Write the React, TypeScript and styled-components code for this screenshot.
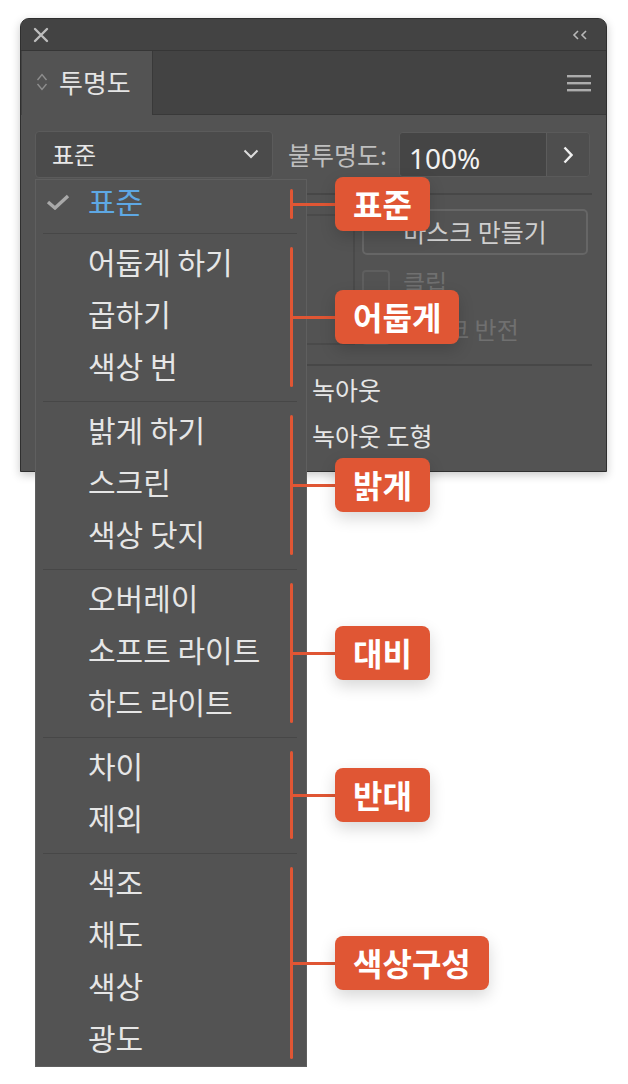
import React from "react";
import styled, { createGlobalStyle } from "styled-components";

const Global = createGlobalStyle`
  html, body {
    margin: 0;
    padding: 0;
    background: #ffffff;
  }
  body {
    font-family: "Noto Sans CJK KR", "Noto Sans", sans-serif;
  }
`;

type Group = { label: string; items: string[] };

const groups: Group[] = [
  { label: "표준", items: ["표준"] },
  { label: "어둡게", items: ["어둡게 하기", "곱하기", "색상 번"] },
  { label: "밝게", items: ["밝게 하기", "스크린", "색상 닷지"] },
  { label: "대비", items: ["오버레이", "소프트 라이트", "하드 라이트"] },
  { label: "반대", items: ["차이", "제외"] },
  { label: "색상구성", items: ["색조", "채도", "색상", "광도"] },
];

const selected = "표준";

const App = () => {
  return (
    <Page>
      <Global />
      <Panel>
        <TitleBar>
          <svg width="16" height="16" viewBox="0 0 16 16">
            <path
              d="M2 2 L14 14 M14 2 L2 14"
              stroke="#bdbdbd"
              strokeWidth="2.4"
              strokeLinecap="round"
            />
          </svg>
          <svg width="16" height="10" viewBox="0 0 16 10">
            <polyline points="6,1 2,5 6,9" fill="none" stroke="#b8b8b8" strokeWidth="1.6" />
            <polyline points="14,1 10,5 14,9" fill="none" stroke="#b8b8b8" strokeWidth="1.6" />
          </svg>
        </TitleBar>
        <TabRow>
          <Tab>
            <svg width="12" height="20" viewBox="0 0 12 20">
              <polyline points="1.5,8 6,2.5 10.5,8" fill="none" stroke="#8e8e8e" strokeWidth="1.4" />
              <polyline points="1.5,12 6,17.5 10.5,12" fill="none" stroke="#8e8e8e" strokeWidth="1.4" />
            </svg>
            <TabTitle>투명도</TabTitle>
          </Tab>
          <TabFill>
            <svg width="24" height="18" viewBox="0 0 24 18">
              <rect x="0" y="1" width="24" height="2.4" fill="#acacac" />
              <rect x="0" y="8" width="24" height="2.4" fill="#acacac" />
              <rect x="0" y="15" width="24" height="2.4" fill="#acacac" />
            </svg>
          </TabFill>
        </TabRow>
        <Body>
          <TopRow>
            <DropdownWrap>
              <Dropdown>
                <span>표준</span>
                <svg width="16" height="10" viewBox="0 0 16 10">
                  <polyline points="1.5,1.5 8,8 14.5,1.5" fill="none" stroke="#dcdcdc" strokeWidth="2" />
                </svg>
              </Dropdown>
              <Menu>
                {groups.map((group, gi) => (
                  <React.Fragment key={group.label}>
                    {gi > 0 && <Separator />}
                    <MenuGroup>
                      {group.items.map((item) => (
                        <Item key={item} $first={gi === 0}>
                          <CheckSlot>
                            {item === selected && (
                              <svg width="24" height="16" viewBox="0 0 24 16">
                                <polyline
                                  points="2,8 9,14 22,2"
                                  fill="none"
                                  stroke="#a9a9a9"
                                  strokeWidth="3.4"
                                />
                              </svg>
                            )}
                          </CheckSlot>
                          <ItemText $active={item === selected}>{item}</ItemText>
                        </Item>
                      ))}
                      <Annotation>
                        <Bracket />
                        <Connector />
                        <Tag>{group.label}</Tag>
                      </Annotation>
                    </MenuGroup>
                  </React.Fragment>
                ))}
              </Menu>
            </DropdownWrap>
            <OpacityLabel>불투명도:</OpacityLabel>
            <InputGroup>
              <OpacityInput>100%</OpacityInput>
              <StepButton>
                <svg width="10" height="18" viewBox="0 0 10 18">
                  <polyline points="1.5,1.5 8.5,9 1.5,16.5" fill="none" stroke="#f0f0f0" strokeWidth="2.4" />
                </svg>
              </StepButton>
            </InputGroup>
          </TopRow>
          <Rule $top={15} $bottom={14} />
          <MaskRow>
            <Thumb />
            <MaskControls>
              <MaskButton>마스크 만들기</MaskButton>
              <CheckRow>
                <CheckBox />
                <CheckText>클립</CheckText>
              </CheckRow>
              <CheckRow>
                <CheckBox />
                <CheckText>마스크 반전</CheckText>
              </CheckRow>
            </MaskControls>
          </MaskRow>
          <Rule $top={19} $bottom={1} />
          <OptionRow>녹아웃</OptionRow>
          <OptionRow>녹아웃 도형</OptionRow>
        </Body>
      </Panel>
    </Page>
  );
};

export default App;

const Page = styled.div`
  position: relative;
  width: 628px;
  height: 1084px;
  padding: 18px 0 0 20px;
  box-sizing: border-box;
`;

const Panel = styled.div`
  width: 587px;
  border: 1px solid #2f2f2f;
  border-radius: 9px 9px 0 0;
  background: #535353;
  box-shadow: 0 3px 10px rgba(0, 0, 0, 0.22);
  box-sizing: border-box;
`;

const TitleBar = styled.div`
  height: 31px;
  display: flex;
  align-items: center;
  justify-content: space-between;
  padding: 0 18px 0 12px;
  background: #434343;
  border-bottom: 1px solid #363636;
  border-radius: 8px 8px 0 0;
`;

const TabRow = styled.div`
  height: 64px;
  display: flex;
  background: #434343;
`;

const Tab = styled.div`
  width: 131px;
  display: flex;
  align-items: center;
  gap: 11px;
  padding-left: 14px;
  padding-bottom: 2px;
  box-sizing: border-box;
  background: #535353;
  border-right: 1px solid #393939;
  margin-left: 1px;
`;

const TabTitle = styled.span`
  font-size: 26px;
  color: #e4e4e4;
  line-height: 1;
`;

const TabFill = styled.div`
  flex: 1;
  display: flex;
  align-items: center;
  justify-content: flex-end;
  padding-right: 15px;
  border-bottom: 1px solid #393939;
`;

const Body = styled.div`
  padding: 16px 14px 12px 14px;
`;

const TopRow = styled.div`
  display: flex;
  align-items: center;
  height: 47px;
`;

const DropdownWrap = styled.div`
  position: relative;
  width: 238px;
  height: 47px;
  z-index: 5;
`;

const Dropdown = styled.div`
  height: 100%;
  display: flex;
  align-items: center;
  justify-content: space-between;
  padding: 0 13px 2px 16px;
  box-sizing: border-box;
  background: #4b4b4b;
  border: 1px solid #5b5b5b;
  border-radius: 4px;
  font-size: 24px;
  color: #e8e8e8;
`;

const Menu = styled.div`
  position: absolute;
  top: calc(100% + 1px);
  left: 0;
  width: 272px;
  background: #535353;
  border: 1px solid #5f5f5f;
  box-sizing: border-box;
`;

const MenuGroup = styled.div`
  position: relative;
`;

const Separator = styled.div`
  height: 12px;
  display: flex;
  align-items: flex-start;
  padding: 7px 9px 0 7px;
  box-sizing: border-box;

  &::after {
    content: "";
    flex: 1;
    height: 1px;
    background: #474747;
  }
`;

const Item = styled.div<{ $first?: boolean }>`
  height: ${(p) => (p.$first ? 46 : 52)}px;
  display: flex;
  align-items: center;
  padding-left: 10px;
  padding-bottom: 7px;
  box-sizing: border-box;
`;

const CheckSlot = styled.div`
  width: 42px;
  display: flex;
  align-items: center;
  padding-top: 4px;
`;

const ItemText = styled.span<{ $active?: boolean }>`
  font-size: 30px;
  line-height: 1;
  color: ${(p) => (p.$active ? "#5ea8e4" : "#e6e6e6")};
`;

const Annotation = styled.div`
  position: absolute;
  top: 9px;
  bottom: 7px;
  left: 254px;
  display: flex;
  align-items: center;
  z-index: 10;
`;

const Bracket = styled.div`
  align-self: stretch;
  width: 3px;
  border-radius: 2px;
  background: #e05634;
`;

const Connector = styled.div`
  width: 42px;
  height: 3px;
  background: #e05634;
`;

const Tag = styled.div`
  height: 54px;
  display: flex;
  align-items: center;
  padding: 0 18px 3px;
  box-sizing: border-box;
  border-radius: 8px;
  background: #e05634;
  color: #ffffff;
  font-size: 32px;
  font-weight: 700;
  white-space: nowrap;
  box-shadow: 0 6px 16px rgba(0, 0, 0, 0.16);
`;

const OpacityLabel = styled.span`
  margin-left: 15px;
  padding-bottom: 2px;
  font-size: 25px;
  color: #bfbfbf;
  white-space: nowrap;
`;

const InputGroup = styled.div`
  margin-left: 12px;
  display: flex;
  height: 45px;
  width: 191px;
  border: 1px solid #5a5a5a;
  border-radius: 4px;
  overflow: hidden;
  box-sizing: border-box;
`;

const OpacityInput = styled.div`
  flex: 1;
  display: flex;
  align-items: center;
  padding: 6px 0 0 9px;
  background: #454545;
  font-family: "Noto Sans", sans-serif;
  font-size: 28px;
  color: #f2f2f2;
`;

const StepButton = styled.div`
  width: 42px;
  display: flex;
  align-items: center;
  justify-content: center;
  background: #4e4e4e;
  border-left: 1px solid #5c5c5c;
`;

const Rule = styled.div<{ $top: number; $bottom: number }>`
  height: 2px;
  background: #474747;
  margin: ${(p) => p.$top}px 0 ${(p) => p.$bottom}px;
`;

const MaskRow = styled.div`
  display: flex;
  justify-content: flex-end;
  gap: 7px;
  padding-right: 4px;
`;

const Thumb = styled.div`
  width: 130px;
  height: 131px;
  margin-top: 5px;
  border: 2px solid #4a4a4a;
  box-sizing: border-box;
`;

const MaskControls = styled.div`
  width: 226px;
  display: flex;
  flex-direction: column;
  gap: 15px;
`;

const MaskButton = styled.div`
  height: 46px;
  display: flex;
  align-items: center;
  justify-content: center;
  padding-bottom: 3px;
  border: 2px solid #666666;
  border-radius: 5px;
  box-sizing: border-box;
  font-size: 25px;
  color: #cfcfcf;
`;

const CheckRow = styled.div`
  display: flex;
  align-items: center;
  gap: 13px;
  height: 28px;

  & + & {
    margin-top: 4px;
  }
`;

const CheckBox = styled.div`
  width: 28px;
  height: 28px;
  border: 2px solid #5f5f5f;
  border-radius: 4px;
  box-sizing: border-box;
`;

const CheckText = styled.span`
  padding-bottom: 6px;
  font-size: 24px;
  color: #707070;
`;

const OptionRow = styled.div`
  height: 46px;
  display: flex;
  align-items: center;
  padding-left: 277px;
  padding-bottom: 2px;
  box-sizing: border-box;
  font-size: 25px;
  color: #e6e6e6;
`;
